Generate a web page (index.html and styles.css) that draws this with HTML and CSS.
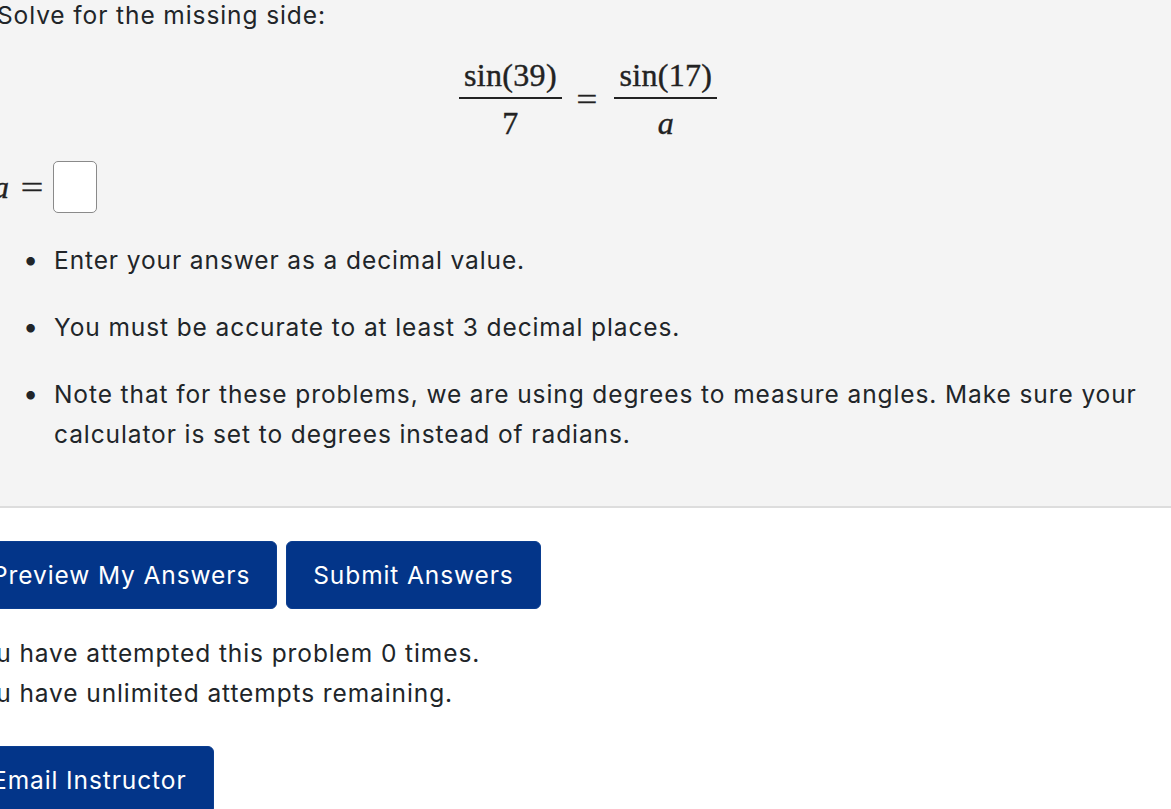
FILE: index.html
```html
<!DOCTYPE html>
<html lang="en">
<head>
<meta charset="utf-8">
<title>Problem</title>
<link rel="stylesheet" href="styles.css">
</head>
<body>
<div class="page">
  <div class="problem">
    <p class="intro">Solve for the missing side:</p>
    <div class="display-math">
      <span class="frac"><span class="num">sin(39)</span><span class="den">7</span></span>
      <span class="eq">=</span>
      <span class="frac"><span class="num">sin(17)</span><span class="den"><i>a</i></span></span>
    </div>
    <div class="answer-row">
      <span class="var"><i>a</i></span><span class="eq-small">=</span><span class="answer-box"></span>
    </div>
    <ul class="notes">
      <li>Enter your answer as a decimal value.</li>
      <li>You must be accurate to at least 3 decimal places.</li>
      <li>Note that for these problems, we are using degrees to measure angles. Make sure your calculator is set to degrees instead of radians.</li>
    </ul>
  </div>
  <div class="actions">
    <div class="buttons">
      <button class="btn">Preview My Answers</button>
      <button class="btn">Submit Answers</button>
    </div>
    <p class="status">You have attempted this problem 0 times.<br>You have unlimited attempts remaining.</p>
    <button class="btn">Email Instructor</button>
  </div>
</div>
</body>
</html>
```
FILE: styles.css
```css
html, body {
  margin: 0;
  padding: 0;
  background: #ffffff;
  overflow: hidden;
}
body {
  font-family: Inter, "Noto Sans", sans-serif;
  font-size: 24.5px;
  letter-spacing: 0.9px;
  line-height: 40px;
  color: #212529;
}
.page {
  margin-top: -5px;
  margin-left: -31px;
  width: 1240px;
}
.problem {
  background: #f4f4f4;
  border-bottom: 2px solid #dddddd;
  padding: 0 0 52px 28px;
}
.intro {
  margin: 0;
}
.display-math {
  display: flex;
  align-items: center;
  margin-left: 462px;
  margin-top: 24px;
  font-family: "Liberation Serif", "DejaVu Serif", serif;
  font-size: 32px;
  letter-spacing: 0.3px;
  line-height: 1;
  color: #222;
  -webkit-text-stroke: 0.4px #222;
}
.frac {
  display: inline-flex;
  flex-direction: column;
  align-items: center;
}
.frac .num {
  padding: 0 5px 6px;
  border-bottom: 2px solid #222;
  width: 93px;
  text-align: center;
}
.frac .den {
  padding-top: 8px;
}
.eq {
  margin: 0 18px 0 16px;
  font-size: 32px;
  transform: scaleX(1.15);
}
.answer-row {
  display: flex;
  align-items: center;
  margin-top: 22px;
  margin-left: -4px;
  font-family: "Liberation Serif", "DejaVu Serif", serif;
  font-size: 32px;
  letter-spacing: 0;
  line-height: 1;
  color: #222;
  -webkit-text-stroke: 0.4px #222;
}
.answer-row .eq-small {
  display: inline-block;
  margin: 0 12px 0 14px;
  transform: scaleX(1.25);
}
.answer-box {
  display: inline-block;
  width: 42px;
  height: 50px;
  background: #fff;
  border: 1.5px solid #8a8a8a;
  border-radius: 5px;
}
.notes {
  margin: 27px 0 0 0;
  padding-left: 57px;
  width: 1120px;
  list-style: none;
}
.notes li {
  margin-bottom: 27px;
}
.notes li::before {
  content: "\2022";
  display: inline-block;
  width: 31px;
  margin-left: -31px;
  letter-spacing: 0;
  font-size: 27px;
}
.notes li:last-child {
  margin-bottom: 0;
}
.actions {
  padding-top: 33px;
  margin-left: -4px;
}
.buttons {
  display: flex;
  gap: 9px;
}
.btn {
  font-family: Inter, "Noto Sans", sans-serif;
  font-size: 24.5px;
  letter-spacing: 0.9px;
  line-height: 36px;
  color: #ffffff;
  background: #033589;
  border: 1px solid #0a3d90;
  border-radius: 6px;
  padding: 15px 26px;
  cursor: pointer;
}
.status {
  margin: 24px 0 0 0;
}
.actions > .btn {
  margin-top: 33px;
}
```
